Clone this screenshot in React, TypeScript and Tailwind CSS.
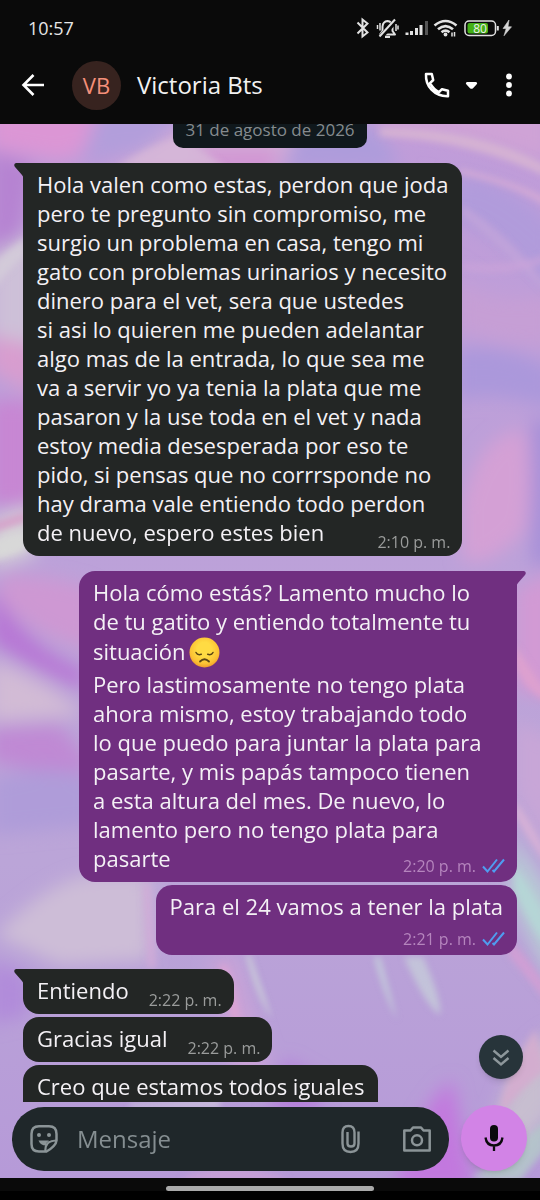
import type { ReactNode } from "react";

function Wallpaper() {
  return (
    <svg
      className="absolute inset-0 h-full w-full"
      viewBox="0 124 540 1054"
      preserveAspectRatio="none"
      aria-hidden="true"
    >
      <defs>
        <linearGradient id="wash" x1="0" y1="0" x2="0" y2="1">
          <stop offset="0" stopColor="#c09cd9" />
          <stop offset="0.4" stopColor="#bca1d9" />
          <stop offset="0.7" stopColor="#bba5d8" />
          <stop offset="1" stopColor="#b69ad8" />
        </linearGradient>
        <filter id="soft" x="-50%" y="-50%" width="200%" height="200%">
          <feGaussianBlur stdDeviation="9" />
        </filter>
        <filter id="fine" x="-50%" y="-50%" width="200%" height="200%">
          <feGaussianBlur stdDeviation="3" />
        </filter>
      </defs>
      <rect x="0" y="124" width="540" height="1054" fill="url(#wash)" />
      <g filter="url(#soft)">
        <path d="M-10 105 H95 Q105 150 60 160 L-10 148Z" fill="#dc96d5" />
        <path d="M100 105 H190 L150 150 L80 162Z" fill="#b29edb" />
        <path d="M-10 150 L35 165 L20 235 L-10 255Z" fill="#b683d2" />
        <path d="M100 180 L180 128 L300 120 L280 175Z" fill="#d1aed7" />
        <path d="M195 150 L282 150 L270 172 L205 168Z" fill="#d292d3" />
        <path d="M282 168 L300 130 L380 120 L400 170Z" fill="#ae9cdb" />
        <path d="M370 105 H550 V165 Q460 130 380 135Z" fill="#cfa3d6" />
        <path d="M450 175 Q500 170 555 225 V300 Q500 230 450 220Z" fill="#b19bdb" />
        <path d="M455 280 Q510 310 555 290 V345 Q510 350 455 330Z" fill="#c69fd5" />
        <path d="M455 350 Q500 340 555 370 V410 Q500 390 455 400Z" fill="#ab98db" />
        <path d="M462 505 Q480 430 525 430 Q536 480 525 530 Q490 570 462 560Z" fill="#d4a0d5" />
        <path d="M532 420 H555 V565 H532Z" fill="#a68fd8" />
        <path d="M-10 255 L40 230 V345 L-10 340Z" fill="#cdc0d8" />
        <path d="M-10 335 L35 345 V395 L-10 370Z" fill="#d89dcf" />
        <path d="M-10 400 H35 V505 H-10Z" fill="#c786d3" />
        <path d="M-10 520 L35 505 V555 L-10 568Z" fill="#d5d1d7" />
        <path d="M0 575 Q60 575 95 590 V650 Q40 640 0 600Z" fill="#ce98d3" />
        <path d="M-10 585 Q30 650 85 670 V690 Q30 670 -10 640Z" fill="#b777d5" />
        <path d="M-10 660 Q40 675 85 715 L-10 722Z" fill="#d2bbd5" />
        <path d="M-10 728 L60 725 L95 770 L60 775 L-10 762Z" fill="#c089d4" />
        <path d="M-10 780 Q50 760 95 780 V825 L-10 835Z" fill="#af9cd9" />
        <path d="M-5 935 Q50 880 90 875 H150 V960 L60 965Z" fill="#cdbdd7" />
        <path d="M-10 960 L28 975 V1015 L-10 1025Z" fill="#b18bda" />
        <path d="M515 590 L555 570 V700 L515 690Z" fill="#d29ad4" />
        <path d="M515 720 L555 740 V860 L515 790Z" fill="#c8a6d7" />
        <path d="M510 835 L555 900 V990 L510 900Z" fill="#b8cbd5" />
        <path d="M395 1190 Q415 1110 452 1080 L475 1190Z" fill="#c278de" />
        <path d="M285 1060 L320 1080 V1110 H270Z" fill="#b57bdc" />
        <path d="M495 1120 Q515 1050 555 1030 V1110 L490 1190Z" fill="#c7bed0" />
        <path d="M210 960 L235 955 L270 1070 L235 1080Z" fill="#cba3d7" />
      </g>
      <g filter="url(#fine)">
        <path d="M118 166 Q150 145 180 136 L225 166Z" fill="#d6b8d8" opacity="0.8" />
        <path d="M-5 262 Q10 248 25 238 V256 Q8 268 -5 290Z" fill="#d4cdd9" opacity="0.8" />
        <path d="M-5 522 L26 512 V522 L-5 532Z" fill="#d795c6" opacity="0.7" />
        <path d="M-5 540 L26 532 V549 L-5 560Z" fill="#d8d8d8" />
        <path d="M380 128 Q480 128 545 165 V176 Q470 140 380 136Z" fill="#d8b7d2" opacity="0.8" />
        <path d="M460 168 Q520 182 545 198 V206 Q515 186 460 174Z" fill="#dcaed4" opacity="0.7" />
        <path d="M462 205 Q510 235 545 285 V292 Q500 245 462 215Z" fill="#c5a5da" opacity="0.7" />
        <path d="M462 262 Q510 268 545 255 V262 Q510 278 462 270Z" fill="#caa4d8" opacity="0.7" />
        <path d="M515 645 Q535 675 545 690 V700 Q525 690 515 665Z" fill="#dda0cf" />
        <path d="M515 800 Q530 820 545 850 V862 Q525 835 515 815Z" fill="#d5b0d6" />
        <path d="M515 865 Q530 890 545 915 V945 Q525 915 515 890Z" fill="#b5d5d6" />
        <path d="M510 940 Q530 960 545 985 V1000 Q525 975 508 955Z" fill="#cf9fd4" />
        <path d="M250 955 Q260 985 272 1018 Q258 1000 246 955Z" fill="#cbcfd9" />
        <path d="M374 957 Q382 990 397 1020 Q388 985 380 957Z" fill="#c3c9da" />
        <path d="M404 957 Q425 1005 440 1015 Q442 1000 423 957Z" fill="#c3c3d9" />
        <path d="M226 965 Q240 1000 243 1050 Q230 1020 220 965Z" fill="#dba3d3" />
        <path d="M143 884 H150 L156 968 H148Z" fill="#d2aad7" opacity="0.8" />
        <path d="M535 1030 Q500 1085 500 1115 Q520 1090 545 1070Z" fill="#d3adcf" />
        <path d="M470 1178 Q500 1165 545 1120 V1150 L520 1180Z" fill="#b3cbc8" opacity="0.8" />
        <path d="M190 1175 Q240 1160 290 1180 H180Z" fill="#cfa3d6" opacity="0.7" />
        <path d="M130 1104 L220 1100 V1108 H130Z" fill="#c9bfdb" />
      </g>
    </svg>
  );
}

function Tail({ side }: { side: "left" | "right" }) {
  return side === "left" ? (
    <svg className="absolute top-0 -left-[9px]" width="24" height="16" viewBox="0 0 24 16" fill="#232625" aria-hidden="true">
      <path d="M2 0H24V16H9.500Q9.500 13.500 8 12L.8 3.800Q-.8 1 2 0Z" />
    </svg>
  ) : (
    <svg className="absolute top-0 -right-[9px]" width="24" height="16" viewBox="0 0 24 16" fill="#702f80" aria-hidden="true">
      <path d="M22 0H0V16H14.500Q14.500 13.500 16 12L23.200 3.800Q24.800 1 22 0Z" />
    </svg>
  );
}

function DoubleCheck() {
  return (
    <svg width="23" height="16" viewBox="0 0 23 16" fill="none" stroke="#4f9df0" strokeWidth="2" aria-label="Leído" role="img">
      <path d="M1 8.500L5.500 13.500L15 1.500M10.500 12L12 13.500L22 1.500" />
    </svg>
  );
}

function SadFace() {
  return (
    <svg className="mx-1 shrink-0" width="31" height="31" viewBox="0 0 31 31" role="img" aria-label="Cara decepcionada">
      <defs>
        <radialGradient id="face" cx="0.5" cy="0.4" r="0.6">
          <stop offset="0.4" stopColor="#ffdb43" />
          <stop offset="0.8" stopColor="#fcc133" />
          <stop offset="1" stopColor="#f09a2c" />
        </radialGradient>
      </defs>
      <circle cx="15.500" cy="15.500" r="15" fill="url(#face)" />
      <g fill="none" stroke="#5a4413" strokeWidth="1.500" strokeLinecap="round">
        <path d="M7 15.500Q8.500 18.500 12.300 17.300M24 15.500Q22.500 18.500 18.700 17.300" />
        <path d="M11 24.500Q15.500 20 20 24.500" strokeWidth="1.800" />
      </g>
    </svg>
  );
}

type BubbleProps = {
  from: "them" | "me";
  time?: string;
  tail?: boolean;
  /** Last line of the message, set beside the time. */
  end?: string;
  className?: string;
  children?: ReactNode;
};

function Bubble({ from, time, tail, end, className = "", children }: BubbleProps) {
  const mine = from === "me";
  const tone = mine ? "self-end bg-[#702f80]" : "self-start bg-[#232625]";
  const corner = !tail ? "rounded-[16px]" : mine ? "rounded-[16px] rounded-tr-none" : "rounded-[16px] rounded-tl-none";
  return (
    <article className={`relative px-3 pt-[7px] pb-1 text-[#f4f1f5] ${tone} ${corner} ${className}`}>
      {tail && <Tail side={mine ? "right" : "left"} />}
      <div className="relative px-0.5 text-[22px] leading-[29px] whitespace-pre">{children}</div>
      {time && (
        <div className={`relative flex items-end gap-[18px] ${end ? "justify-between" : "mt-2 justify-end"}`}>
          {end && <p className="px-0.5 pb-[5px] text-[22px] leading-[29px] whitespace-pre">{end}</p>}
          <div
            className={`flex items-center gap-1.5 text-[16px] leading-5 whitespace-nowrap ${
              mine ? "pb-0.5 text-[#b585bd]" : "text-[#9a9c9b]"
            }`}
          >
            <time>{time}</time>
            {mine && <DoubleCheck />}
          </div>
        </div>
      )}
    </article>
  );
}

function StatusIcons() {
  return (
    <svg width="160" height="24" viewBox="354 15 160 24" fill="none" stroke="#e2e2e2" strokeWidth="1.700" role="img" aria-label="Bluetooth, silencio, señal, wifi, batería 80, cargando">
      <path d="M357.500 21.500L367.500 31.500L362.500 35.500V18.500L367.500 22.500L357.500 32.500" strokeWidth="2" />
      <path d="M380 33.500H395L392.500 30V25.500Q392 20.500 387.500 20Q383 20.500 382.500 25.500V30Z" strokeWidth="2" strokeLinejoin="round" />
      <path d="M396.500 19L380.500 36" stroke="#0a0a0a" strokeWidth="5" />
      <path d="M395 18.500L379.500 35.500" strokeWidth="2" />
      <path d="M385 36H390" strokeWidth="2" />
      <path d="M380 22V29.500M377.500 24V28M396 23V30M398 24.500V28.500" strokeWidth="1.500" />
      <path d="M407 31.500V34M411.500 30V34M416.500 27V34M421 24V34" strokeWidth="3" />
      <path d="M426.500 20V34" stroke="#555" strokeWidth="3" />
      <path d="M434.500 24.500Q445.500 15.500 456.500 24.500M438 28.300Q445.500 21.800 453 28.300M441.500 31.300Q445.500 28 449.500 31.300" strokeWidth="2.600" />
      <circle cx="445.500" cy="33.500" r="1.900" fill="#e2e2e2" stroke="none" />
      <path d="M452 35.500V31.500M454.500 31V35.500" strokeWidth="1.500" />
      <rect x="465" y="20" width="30.500" height="14.500" rx="4" strokeWidth="1.500" />
      <rect x="467.500" y="22" width="20.500" height="10.500" rx="2" fill="#43b016" stroke="none" />
      <path d="M497.800 25V29.500" strokeWidth="2" />
      <text x="480" y="31.500" textAnchor="middle" fontSize="12" fontFamily="Open Sans, sans-serif" fill="#f0f0f0" stroke="none">80</text>
      <path d="M509 19L503 27.500H506.200L504 34.800L511.500 25.800H508Z" fill="#d5d5d5" stroke="#d5d5d5" strokeWidth="0.600" />
    </svg>
  );
}

export default function App() {
  return (
    <div className="flex h-screen flex-col overflow-hidden bg-[#0a0a0a] font-['Open_Sans','Noto_Sans',sans-serif] text-white">
      <div className="flex h-14 shrink-0 items-center justify-between pr-[26px] pl-7 text-[#e6e6e6]">
        <span className="text-[18px] leading-6">10:57</span>
        <StatusIcons />
      </div>

      <header className="flex h-[68px] shrink-0 items-start pr-5 pl-[21px]">
        <button aria-label="Atrás" className="flex h-[58px] w-6 items-center">
          <svg width="24" height="24" viewBox="0 0 24 24" fill="none" stroke="#fff" strokeWidth="2.600">
            <path d="M23 12H3M12.500 2L2.500 12L12.500 22" />
          </svg>
        </button>
        <div className="mt-[5px] ml-[27px] flex size-[49px] items-center justify-center rounded-full bg-[#37231f] text-[22px] text-[#f4907a]">
          VB
        </div>
        <h1 className="ml-4 text-[24px] leading-[58px] whitespace-nowrap text-[#f2f2f2]">Victoria Bts</h1>
        <div className="ml-auto flex h-[58px] items-center">
          <button aria-label="Llamar" className="flex items-center gap-3.5">
            <svg width="28" height="28" viewBox="0 0 28 28" fill="none" stroke="#fff" strokeWidth="2.500" strokeLinejoin="round">
              <path d="M4 3H9.800L11.200 9L8 12.200Q11.500 18.500 17 21.200L20 18.200L26 19.700V25.200Q16 25.500 9.500 18.700Q3.500 12.500 4 3Z" />
            </svg>
            <svg width="14" height="10" viewBox="0 0 14 10" fill="#fff">
              <path d="M3 2H12Q14 3 12.500 4.500L9 8.200Q7.500 9.500 6 8.200L2.500 4.500Q1 3 3 2Z" />
            </svg>
          </button>
          <button aria-label="Más opciones" className="ml-5 flex w-[22px] justify-center">
            <svg width="6" height="24" viewBox="0 0 6 24" fill="#fff">
              <circle cx="3" cy="3.500" r="2.900" />
              <circle cx="3" cy="12" r="2.900" />
              <circle cx="3" cy="20.500" r="2.900" />
            </svg>
          </button>
        </div>
      </header>

      <main className="relative flex min-h-0 flex-1 flex-col">
        <Wallpaper />

        <section aria-label="Conversación" className="relative flex min-h-0 flex-1 flex-col overflow-hidden px-[23px]">
          <div className="-mt-3 mb-[15px] shrink-0 self-center rounded-[10px] bg-[#10181c] px-3 text-[17px] leading-9 whitespace-nowrap text-[#858b8e]">
            31 de agosto de 2026
          </div>
          <div className="flex flex-col gap-[3px]">
            <Bubble from="them" tail time="2:10 p. m." end="de nuevo, espero estes bien">
              {`Hola valen como estas, perdon que joda
pero te pregunto sin compromiso, me
surgio un problema en casa, tengo mi
gato con problemas urinarios y necesito
dinero para el vet, sera que ustedes
si asi lo quieren me pueden adelantar
algo mas de la entrada, lo que sea me
va a servir yo ya tenia la plata que me
pasaron y la use toda en el vet y nada
estoy media desesperada por eso te
pido, si pensas que no corrrsponde no
hay drama vale entiendo todo perdon`}
            </Bubble>
            <Bubble from="me" tail time="2:20 p. m." end="pasarte" className="mt-3 w-[438px] max-w-full">
              <p>{`Hola cómo estás? Lamento mucho lo
de tu gatito y entiendo totalmente tu`}</p>
              <p className="flex h-[34px] items-start pt-px">
                situación
                <SadFace />
              </p>
              <p>{`Pero lastimosamente no tengo plata
ahora mismo, estoy trabajando todo
lo que puedo para juntar la plata para
pasarte, y mis papás tampoco tienen
a esta altura del mes. De nuevo, lo
lamento pero no tengo plata para`}</p>
            </Bubble>
            <Bubble from="me" time="2:21 p. m.">
              Para el 24 vamos a tener la plata
            </Bubble>
            <Bubble from="them" tail time="2:22 p. m." end="Entiendo" className="mt-[11px]" />
            <Bubble from="them" time="2:22 p. m." end="Gracias igual" />
            <Bubble from="them" className="h-16">
              Creo que estamos todos iguales
            </Bubble>
          </div>
        </section>

        <button
          aria-label="Ir al final"
          className="absolute right-[17px] bottom-[99px] flex size-11 items-center justify-center rounded-full bg-[#27343a] shadow-md"
        >
          <svg width="18" height="20" viewBox="0 0 18 20" fill="none" stroke="#8d979b" strokeWidth="2.400">
            <path d="M1.500 3.500L9 10L16.500 3.500M1.500 11L9 17.500L16.500 11" />
          </svg>
        </button>

        <form className="relative flex shrink-0 items-center gap-3 pt-[3px] pr-[13px] pb-[7px] pl-3" onSubmit={(e) => e.preventDefault()}>
          <div className="mt-0.5 flex h-16 min-w-0 flex-1 items-center rounded-full bg-[#1f272a] px-[17px] text-[#8b9497]">
            <button type="button" aria-label="Stickers" className="shrink-0">
              <svg width="30" height="30" viewBox="0 0 30 30" fill="none" stroke="currentColor" strokeWidth="2.500">
                <path d="M10 2.300H20Q27.500 2.300 27.500 10V16.500Q27 22 17.500 27.500H10Q2.500 27.500 2.500 20V10Q2.500 2.300 10 2.300Z" strokeLinejoin="round" />
                <path d="M16.500 27Q16 22.500 18.500 19.500Q21.500 16.500 27 16.500" strokeWidth="2.200" />
                <path d="M9.500 16.500H20Q17.500 18 17 21.500Q11.500 21.500 9.500 16.500Z" fill="currentColor" stroke="none" />
                <circle cx="10" cy="11" r="2" fill="currentColor" stroke="none" />
                <circle cx="20" cy="11" r="2" fill="currentColor" stroke="none" />
              </svg>
            </button>
            <input
              type="text"
              aria-label="Mensaje"
              placeholder="Mensaje"
              className="ml-[18px] min-w-0 flex-1 bg-transparent text-[24px] leading-8 text-white outline-none placeholder:text-[#858e91]"
            />
            <button type="button" aria-label="Adjuntar" className="shrink-0">
              <svg width="20" height="30" viewBox="0 0 20 30" fill="none" stroke="currentColor" strokeWidth="2.400">
                <path d="M18.500 7.500V19.500Q18.500 28 10.500 28Q2.500 28 2.500 19.500V8.500Q2.500 2 8.500 2Q14.500 2 14.500 8.500V19.500Q14.500 22.500 11 22.500Q7.500 22.500 7.500 19.500V8" />
              </svg>
            </button>
            <button type="button" aria-label="Cámara" className="ml-[42px] shrink-0">
              <svg width="30" height="28" viewBox="0 0 30 28" fill="none" stroke="currentColor" strokeWidth="2.500" strokeLinejoin="round">
                <path d="M2.300 5.500H8.500L11 2.500H19L21.500 5.500H27.700V25.500H2.300Z" />
                <circle cx="15" cy="15.300" r="5" />
              </svg>
            </button>
          </div>
          <button type="button" aria-label="Grabar mensaje de voz" className="flex size-[66px] shrink-0 items-center justify-center rounded-full bg-[#d283e6] shadow-md">
            <svg width="20" height="28" viewBox="0 0 20 28" fill="none" stroke="#0b0a0c" strokeWidth="2.300">
              <rect x="6" y="1" width="8" height="16.500" rx="4" fill="#0b0a0c" stroke="none" />
              <path d="M1.500 13.500Q2.500 21.500 10 21.500Q17.500 21.500 18.500 13.500M10 21.500V27" />
            </svg>
          </button>
        </form>
      </main>

      <div className="flex h-[22px] shrink-0 flex-col">
        <div className="flex h-[13px] items-end justify-center">
          <div className="h-[5px] w-[208px] rounded-full bg-[#a9a9a9]" />
        </div>
        <div className="flex-1 bg-black" />
      </div>
    </div>
  );
}
